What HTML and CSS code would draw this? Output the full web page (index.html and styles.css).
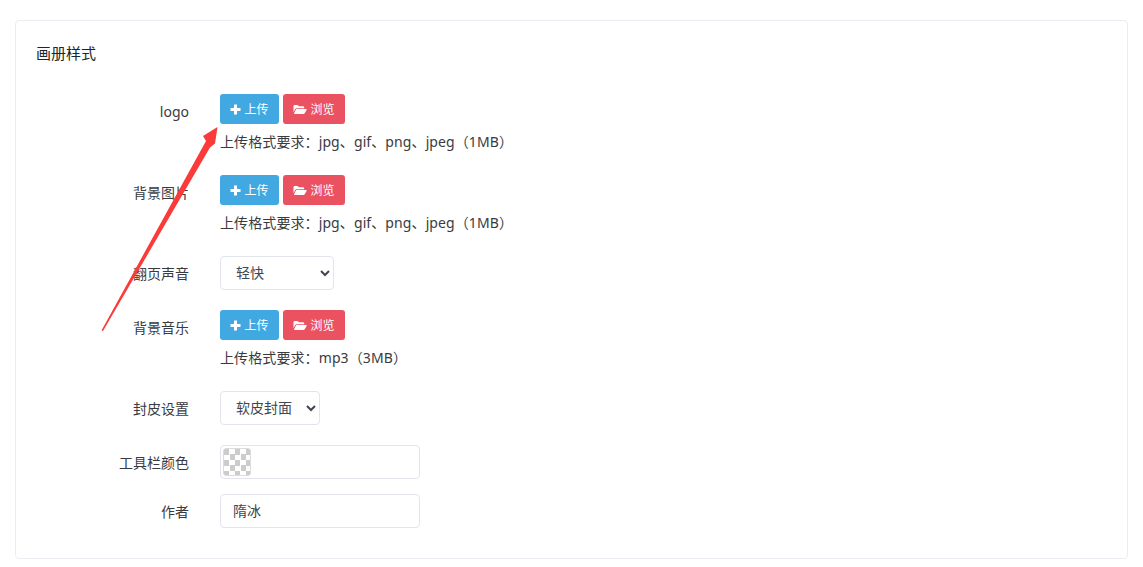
FILE: index.html
```html
<!DOCTYPE html>
<html lang="zh">
<head>
<meta charset="utf-8">
<title>画册样式</title>
<link rel="stylesheet" href="styles.css">
</head>
<body>
<main class="card">
  <h2 class="title">画册样式</h2>
  <form class="form">
    <div class="row">
      <label class="label label-btn">logo</label>
      <div class="field">
        <div class="btns">
          <button type="button" class="btn btn-up"><svg class="ico" viewBox="0 0 11 11"><path d="M4 0.5h3v3.5h3.5v3H7v3.5H4V7H0.500V4H4z"/></svg>上传</button>
          <button type="button" class="btn btn-browse"><svg class="ico ico-f" viewBox="0 0 14 11"><path d="M0.500 2.200Q0.500 1 1.700 1H4.500L5.800 2.300H10Q11.200 2.300 11.200 3.500V4.200H3.500Q2.700 4.200 2.200 5L0.500 8.200z"/><path d="M3.300 5.100H13.200Q14 5.100 13.600 6L11.700 9.200Q11.200 10 10.400 10H1.400Q0.700 10 1.100 9.200L2.900 5.500z"/></svg>浏览</button>
        </div>
        <p class="hint">上传格式要求：jpg、gif、png、jpeg（1MB）</p>
      </div>
    </div>
    <div class="row">
      <label class="label label-btn">背景图片</label>
      <div class="field">
        <div class="btns">
          <button type="button" class="btn btn-up"><svg class="ico" viewBox="0 0 11 11"><path d="M4 0.5h3v3.5h3.5v3H7v3.5H4V7H0.500V4H4z"/></svg>上传</button>
          <button type="button" class="btn btn-browse"><svg class="ico ico-f" viewBox="0 0 14 11"><path d="M0.500 2.200Q0.500 1 1.700 1H4.500L5.800 2.300H10Q11.200 2.300 11.200 3.500V4.200H3.500Q2.700 4.200 2.200 5L0.500 8.200z"/><path d="M3.300 5.100H13.200Q14 5.100 13.600 6L11.700 9.200Q11.200 10 10.400 10H1.400Q0.700 10 1.100 9.200L2.900 5.500z"/></svg>浏览</button>
        </div>
        <p class="hint">上传格式要求：jpg、gif、png、jpeg（1MB）</p>
      </div>
    </div>
    <div class="row">
      <label class="label">翻页声音</label>
      <div class="field">
        <select class="control select-sound"><option>轻快</option></select>
      </div>
    </div>
    <div class="row">
      <label class="label label-btn">背景音乐</label>
      <div class="field">
        <div class="btns">
          <button type="button" class="btn btn-up"><svg class="ico" viewBox="0 0 11 11"><path d="M4 0.5h3v3.5h3.5v3H7v3.5H4V7H0.500V4H4z"/></svg>上传</button>
          <button type="button" class="btn btn-browse"><svg class="ico ico-f" viewBox="0 0 14 11"><path d="M0.500 2.200Q0.500 1 1.700 1H4.500L5.800 2.300H10Q11.200 2.300 11.200 3.500V4.200H3.500Q2.700 4.200 2.200 5L0.500 8.200z"/><path d="M3.300 5.100H13.200Q14 5.100 13.600 6L11.700 9.200Q11.200 10 10.400 10H1.400Q0.700 10 1.100 9.200L2.900 5.500z"/></svg>浏览</button>
        </div>
        <p class="hint">上传格式要求：mp3（3MB）</p>
      </div>
    </div>
    <div class="row">
      <label class="label">封皮设置</label>
      <div class="field">
        <select class="control select-cover"><option>软皮封面</option></select>
      </div>
    </div>
    <div class="row row-tight">
      <label class="label">工具栏颜色</label>
      <div class="field">
        <div class="control color-box"><span class="swatch"></span></div>
      </div>
    </div>
    <div class="row row-last">
      <label class="label">作者</label>
      <div class="field">
        <input class="control text-input" type="text" value="隋冰">
      </div>
    </div>
  </form>
</main>
<svg class="arrow" width="1143" height="567" viewBox="0 0 1143 567"><polygon points="101.500,330.500 206,141 203,136 217.500,127 215,143.500 210,147.500 103,331"/></svg>
</body>
</html>
```

FILE: styles.css
```css
* { box-sizing: border-box; }
html, body { height: 100%; }
body {
  margin: 0;
  padding: 20px 15px 0;
  background: #fff;
  color: #333;
  font: 14px/20px "Noto Sans", "Noto Sans CJK SC", sans-serif;
  overflow: hidden;
  position: relative;
}
.card {
  height: 539px;
  border: 1px solid #ebedf2;
  border-radius: 4px;
  padding: 22px 20px 0;
}
.title {
  margin: 0 0 31px;
  font-size: 15px;
  font-weight: 400;
  line-height: 20px;
  color: #212529;
}
.form { display: flex; flex-direction: column; }
.row { display: flex; margin-bottom: 20px; }
.row-tight { margin-bottom: 15px; }
.row-last { margin-bottom: 0; }
.label {
  width: 153px;
  flex: none;
  padding-top: 8px;
  text-align: right;
  color: #3a3b40;
}
.field { margin-left: 31px; }
.btns { display: flex; gap: 4px; }
.btn {
  display: inline-flex;
  align-items: center;
  justify-content: center;
  height: 30px;
  border: 0;
  border-radius: 3px;
  color: #fff;
  font: inherit;
  font-size: 12px;
  padding: 2px 0 0;
}
.btn-up { width: 59px; background: #41a8e2; }
.btn-browse { width: 62px; background: #ea5161; }
.ico { width: 11px; height: 11px; margin: 0 3px 2px 0; fill: #fff; }
.ico-f { width: 14px; }
.hint {
  margin: 6px 0 0;
  padding-bottom: 2px;
  line-height: 23px;
  letter-spacing: 0.1px;
  color: #3a3b40;
}
.control {
  display: block;
  height: 34px;
  border: 1px solid #e2e5ec;
  border-radius: 4px;
  background: #fff;
  color: #41464f;
  font: inherit;
}
select.control { padding: 0 8px 2px 11px; }
.select-sound { width: 114px; }
.select-cover { width: 100px; }
.color-box { width: 200px; padding: 2px; }
.swatch {
  display: block;
  width: 28px;
  height: 28px;
  border: 1px solid #dcdcdc;
  border-radius: 3px;
  background-color: #fff;
  background-image: conic-gradient(#fff 25%, #ccc 0 50%, #fff 0 75%, #ccc 0);
  background-size: 11px 11px;
}
.text-input { width: 200px; padding: 0 12px 2px; outline: none; }
.arrow { position: absolute; left: 0; top: 0; pointer-events: none; }
.arrow polygon { fill: #fb3a3a; }
```
